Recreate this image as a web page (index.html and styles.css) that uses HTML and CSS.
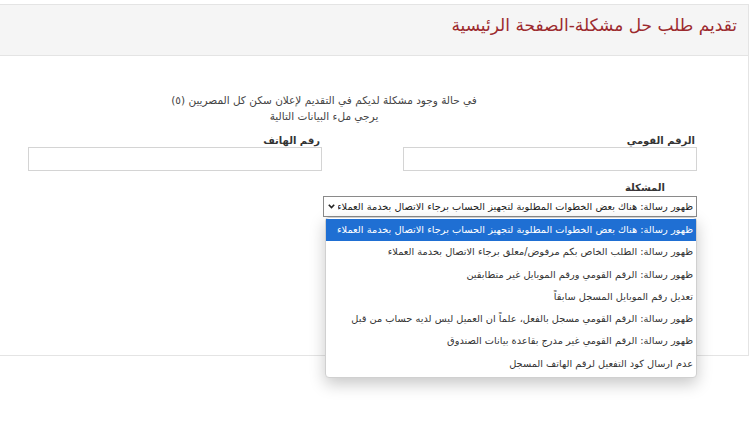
FILE: index.html
```html
<!DOCTYPE html>
<html lang="ar" dir="rtl">
<head>
    <meta charset="UTF-8">
    <title>تقديم طلب حل مشكلة</title>
    <link rel="stylesheet" href="styles.css">
</head>
<body>
    <div class="panel">
        <div class="panel-head">
            <h1>تقديم طلب حل مشكلة-الصفحة الرئيسية</h1>
        </div>
        <div class="panel-body">
            <div class="intro">
                <p>في حالة وجود مشكلة لديكم في التقديم لإعلان سكن كل المصريين (٥)</p>
                <p>يرجي ملء البيانات التالية</p>
            </div>
            <div class="row">
                <div class="field">
                    <label>الرقم القومي</label>
                    <div class="input"></div>
                </div>
                <div class="field">
                    <label>رقم الهاتف</label>
                    <div class="input"></div>
                </div>
            </div>
            <div class="field problem">
                <label>المشكلة</label>
                <div class="select">
                    <span>ظهور رسالة: هناك بعض الخطوات المطلوبة لتجهيز الحساب برجاء الاتصال بخدمة العملاء</span>
                    <svg class="arrow" width="7" height="5" viewBox="0 0 7 5"><path d="M0.8 0.8 L3.5 3.6 L6.2 0.8" fill="none" stroke="#222" stroke-width="1.6"/></svg>
                </div>
                <ul class="options">
                    <li class="active">ظهور رسالة: هناك بعض الخطوات المطلوبة لتجهيز الحساب برجاء الاتصال بخدمة العملاء</li>
                    <li>ظهور رسالة: الطلب الخاص بكم مرفوض/معلق برجاء الاتصال بخدمة العملاء</li>
                    <li>ظهور رسالة: الرقم القومي ورقم الموبايل غير متطابقين</li>
                    <li>تعديل رقم الموبايل المسجل سابقاً</li>
                    <li>ظهور رسالة: الرقم القومي مسجل بالفعل، علماً ان العميل ليس لديه حساب من قبل</li>
                    <li>ظهور رسالة: الرقم القومي غير مدرج بقاعدة بيانات الصندوق</li>
                    <li>عدم ارسال كود التفعيل لرقم الهاتف المسجل</li>
                </ul>
            </div>
        </div>
    </div>
</body>
</html>
```

FILE: styles.css
```css
html, body {
    min-height: 430px;
}
body {
    margin: 0;
    background: #fff;
    font-family: "DejaVu Sans", sans-serif;
    color: #333;
}
.panel {
    margin: 4px 1px 0 -1px;
    height: 350px;
    border: 1px solid #e4e4e4;
    position: relative;
}
.panel-head {
    background: #f5f5f5;
    height: 50px;
    border-bottom: 1px solid #e4e4e4;
    padding-right: 11px;
}
.panel-head h1 {
    margin: 0;
    padding-top: 10px;
    font-size: 17px;
    font-weight: normal;
    color: #9c2a2e;
}
.panel-body {
    padding: 36px 51px 0 28px;
}
.intro {
    margin-right: 77px;
    text-align: center;
    font-size: 10.5px;
    color: #444;
}
.intro p {
    margin: 0;
    line-height: 16px;
}
.row {
    display: flex;
    justify-content: space-between;
    margin-top: 11px;
}
.field {
    width: 294px;
}
.field label {
    display: block;
    font-size: 10px;
    font-weight: bold;
    color: #333;
    padding-right: 2px;
    line-height: 12px;
}
.input {
    height: 22px;
    border: 1px solid #d4d4d4;
}
.problem {
    width: 374px;
    margin-top: 11px;
    position: relative;
}
.problem label {
    padding-right: 32px;
    margin-bottom: 2px;
}
.select {
    display: flex;
    align-items: center;
    justify-content: space-between;
    gap: 3px;
    height: 19px;
    border: 1px solid #8a8a8a;
    padding: 0 3px 0 4px;
    font-size: 9.8px;
    color: #222;
    white-space: nowrap;
}
.select span {
    min-width: 0;
    overflow: hidden;
}
.arrow {
    flex: none;
}
.options {
    position: absolute;
    top: 35px;
    right: 0;
    width: 370px;
    margin: 0;
    padding: 1px 0 2px;
    list-style: none;
    background: #fff;
    border: 1px solid #d0d0d0;
    border-radius: 4px;
    box-shadow: 0 6px 16px rgba(0, 0, 0, 0.22);
}
.options li {
    height: 22.3px;
    line-height: 22px;
    padding-right: 3px;
    font-size: 9.8px;
    color: #333;
    white-space: nowrap;
}
.options li.active {
    background: #1f6fd3;
    color: #fff;
}
```
